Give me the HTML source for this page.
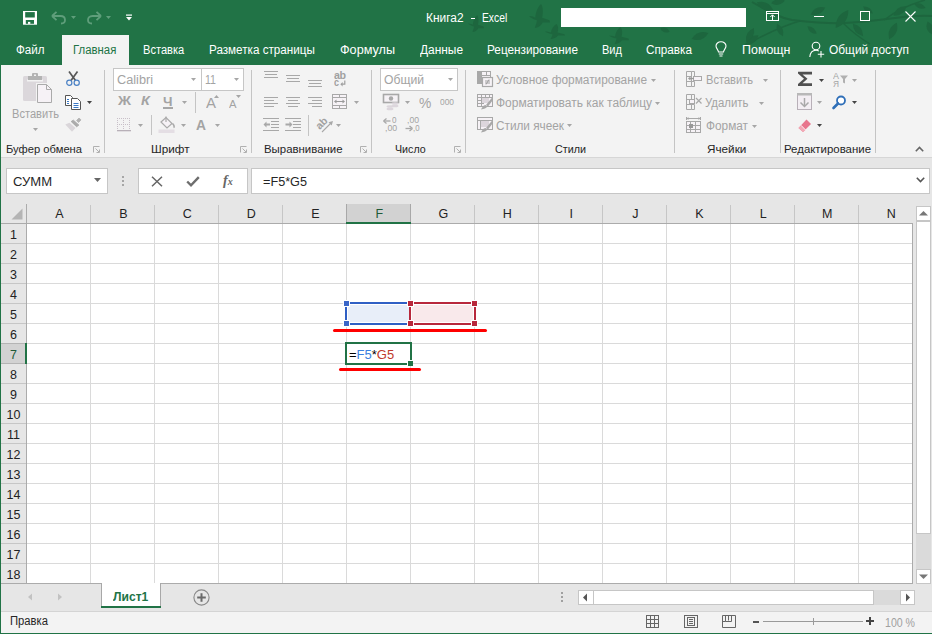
<!DOCTYPE html>
<html><head><meta charset="utf-8"><style>*{margin:0;padding:0;box-sizing:border-box}
html,body{width:932px;height:634px;overflow:hidden;background:#e6e6e6;font-family:"Liberation Sans",sans-serif;position:relative}
.a{position:absolute}
.tx{white-space:nowrap;transform-origin:0 0}
svg{overflow:visible}
</style></head><body>
<div class="a" style="left:0px;top:0px;width:932px;height:65px;background:#217346"></div>
<svg class="a" style="left:0;top:0" width="932" height="65" viewBox="0 0 932 65"><path d="M752 2 C770 12 780 18 792 20 C810 22 830 24 845 23 C865 22 880 20 895 18 C910 16 920 15 932 16" fill="none" stroke="#1d663e" stroke-width="2"/><path d="M745 45 C760 38 775 28 800 21" fill="none" stroke="#1d663e" stroke-width="1.5"/><path d="M884 20 C895 12 905 6 925 0" fill="none" stroke="#1d663e" stroke-width="1.5"/><path d="M843 23 C850 30 860 38 870 44" fill="none" stroke="#1d663e" stroke-width="1.2"/><path transform="translate(842 19) rotate(-55)" d="M-11 0 Q0 -8.0 11 0 Q0 8.0 -11 0 Z" fill="#1d663e"/><path transform="translate(858 30) rotate(50)" d="M-8 0 Q0 -6.4 8 0 Q0 6.4 -8 0 Z" fill="#1d663e"/><path transform="translate(893 31) rotate(-65)" d="M-9 0 Q0 -7.2 9 0 Q0 7.2 -9 0 Z" fill="#1d663e"/><path transform="translate(900 11) rotate(-35)" d="M-8 0 Q0 -6.4 8 0 Q0 6.4 -8 0 Z" fill="#1d663e"/><path transform="translate(765 6) rotate(25)" d="M-9 0 Q0 -7.2 9 0 Q0 7.2 -9 0 Z" fill="#1d663e"/><path transform="translate(780 30) rotate(65)" d="M-7 0 Q0 -5.6000000000000005 7 0 Q0 5.6000000000000005 -7 0 Z" fill="#1d663e"/><path transform="translate(818 11) rotate(-25)" d="M-8 0 Q0 -6.4 8 0 Q0 6.4 -8 0 Z" fill="#1d663e"/><path transform="translate(778 2) rotate(-10)" d="M-7 0 Q0 -5.6000000000000005 7 0 Q0 5.6000000000000005 -7 0 Z" fill="#1d663e"/><path transform="translate(930 28) rotate(70)" d="M-7 0 Q0 -6.4 7 0 Q0 6.4 -7 0 Z" fill="#1d663e"/><path transform="translate(752 40) rotate(-35)" d="M-8 0 Q0 -6.4 8 0 Q0 6.4 -8 0 Z" fill="#1d663e"/><path transform="translate(868 10) rotate(35)" d="M-6 0 Q0 -4.800000000000001 6 0 Q0 4.800000000000001 -6 0 Z" fill="#1d663e"/><path transform="translate(920 6) rotate(20)" d="M-6 0 Q0 -4.800000000000001 6 0 Q0 4.800000000000001 -6 0 Z" fill="#1d663e"/><path transform="translate(812 30) rotate(40)" d="M-6 0 Q0 -4.800000000000001 6 0 Q0 4.800000000000001 -6 0 Z" fill="#1d663e"/><path transform="translate(468 15) scale(0.8 0.7727272727272727)" d="M0 11 C3 11 5 12 6 12.5 C6.5 7 8.5 2.5 11.5 0 C13.5 3 13.5 8 12.5 12.5 L19.5 15 L20 17 L13 17 C11.5 20 8.5 22 5.5 22 C6.5 19.5 7.5 17 7.5 15 C4 14 2 13 0 11 Z" fill="#1d663e"/><path transform="translate(529 4) scale(1.05 1.0909090909090908)" d="M0 11 C3 11 5 12 6 12.5 C6.5 7 8.5 2.5 11.5 0 C13.5 3 13.5 8 12.5 12.5 L19.5 15 L20 17 L13 17 C11.5 20 8.5 22 5.5 22 C6.5 19.5 7.5 17 7.5 15 C4 14 2 13 0 11 Z" fill="#1d663e"/><path transform="translate(545 24) scale(1.0 0.6818181818181818)" d="M0 11 C3 11 5 12 6 12.5 C6.5 7 8.5 2.5 11.5 0 C13.5 3 13.5 8 12.5 12.5 L19.5 15 L20 17 L13 17 C11.5 20 8.5 22 5.5 22 C6.5 19.5 7.5 17 7.5 15 C4 14 2 13 0 11 Z" fill="#1d663e"/><path transform="translate(609 27) scale(1.0 0.7727272727272727)" d="M0 11 C3 11 5 12 6 12.5 C6.5 7 8.5 2.5 11.5 0 C13.5 3 13.5 8 12.5 12.5 L19.5 15 L20 17 L13 17 C11.5 20 8.5 22 5.5 22 C6.5 19.5 7.5 17 7.5 15 C4 14 2 13 0 11 Z" fill="#1d663e"/><path transform="translate(700 36) rotate(-20)" d="M-9 0 Q0 -7.2 9 0 Q0 7.2 -9 0 Z" fill="#1d663e"/><path transform="translate(750 35) rotate(-60)" d="M-8 0 Q0 -6.4 8 0 Q0 6.4 -8 0 Z" fill="#1d663e"/><path transform="translate(665 30) rotate(20)" d="M-5 0 Q0 -4.800000000000001 5 0 Q0 4.800000000000001 -5 0 Z" fill="#1d663e"/></svg>
<div class="a tx" style="transform:scaleX(0.9926);left:426.2px;top:11.84px;font-size:12px;line-height:12px;color:#fff;">Книга2</div>
<div class="a" style="left:471px;top:18px;width:3.5px;height:1.2px;background:#fff"></div>
<div class="a tx" style="transform:scaleX(0.8588);left:481.5px;top:11.84px;font-size:12px;line-height:12px;color:#fff;">Excel</div>
<div class="a" style="left:561px;top:8px;width:185px;height:19px;background:#fff"></div>
<div class="a" style="left:62px;top:35px;width:67px;height:30px;background:#f3f3f3"></div>
<div class="a tx" style="transform:scaleX(0.9477);left:73.3px;top:43.84px;font-size:12px;line-height:12px;color:#217346;">Главная</div>
<div class="a tx" style="transform:scaleX(0.9656);left:16px;top:43.84px;font-size:12px;line-height:12px;color:#fff;">Файл</div>
<div class="a tx" style="transform:scaleX(0.9236);left:142.5px;top:43.84px;font-size:12px;line-height:12px;color:#fff;">Вставка</div>
<div class="a tx" style="transform:scaleX(0.9718);left:209.4px;top:43.84px;font-size:12px;line-height:12px;color:#fff;">Разметка страницы</div>
<div class="a tx" style="transform:scaleX(1.0533);left:340px;top:43.84px;font-size:12px;line-height:12px;color:#fff;">Формулы</div>
<div class="a tx" style="transform:scaleX(0.9917);left:420px;top:43.84px;font-size:12px;line-height:12px;color:#fff;">Данные</div>
<div class="a tx" style="transform:scaleX(0.9820);left:487px;top:43.84px;font-size:12px;line-height:12px;color:#fff;">Рецензирование</div>
<div class="a tx" style="transform:scaleX(0.9209);left:602px;top:43.84px;font-size:12px;line-height:12px;color:#fff;">Вид</div>
<div class="a tx" style="transform:scaleX(0.9771);left:646px;top:43.84px;font-size:12px;line-height:12px;color:#fff;">Справка</div>
<div class="a tx" style="transform:scaleX(1.0378);left:741.6px;top:43.84px;font-size:12px;line-height:12px;color:#fff;">Помощн</div>
<div class="a tx" style="transform:scaleX(0.9922);left:829px;top:43.84px;font-size:12px;line-height:12px;color:#fff;">Общий доступ</div>
<div class="a" style="left:1px;top:65px;width:931px;height:92px;background:#f3f3f3"></div>
<div class="a" style="left:1px;top:157px;width:931px;height:1px;background:#d6d6d6"></div>
<div class="a" style="left:0px;top:65px;width:1px;height:569px;background:#217346"></div>
<div class="a" style="left:6px;top:168px;width:102px;height:26px;background:#fff;border:1px solid #c6c6c6"></div>
<div class="a tx" style="transform:scaleX(1.0866);left:13.4px;top:175.84px;font-size:12px;line-height:12px;color:#262626;">СУММ</div>
<div class="a" style="left:138px;top:168px;width:110px;height:26px;background:#fff;border:1px solid #c6c6c6"></div>
<div class="a" style="left:251px;top:168px;width:679px;height:26px;background:#fff;border:1px solid #c6c6c6"></div>
<div class="a tx" style="transform:scaleX(1.0551);left:262.7px;top:175.84px;font-size:12px;line-height:12px;color:#262626;">=F5*G5</div>
<div class="a" style="left:1px;top:223px;width:912px;height:360px;background:#fff"></div>
<div class="a" style="left:1px;top:204px;width:912px;height:19px;background:#e6e6e6"></div>
<svg class="a" style="left:11px;top:208px;" width="12" height="12" viewBox="0 0 12 12"><path d="M11.5 0.5 L11.5 11.5 L0.5 11.5 Z" fill="#b4b4b4"/></svg>
<div class="a" style="left:1px;top:224px;width:25px;height:359px;background:#e6e6e6"></div>
<div class="a" style="left:90px;top:224px;width:1px;height:359px;background:#dadada"></div>
<div class="a" style="left:90px;top:205px;width:1px;height:18px;background:#c6c6c6"></div>
<div class="a" style="left:154px;top:224px;width:1px;height:359px;background:#dadada"></div>
<div class="a" style="left:154px;top:205px;width:1px;height:18px;background:#c6c6c6"></div>
<div class="a" style="left:218px;top:224px;width:1px;height:359px;background:#dadada"></div>
<div class="a" style="left:218px;top:205px;width:1px;height:18px;background:#c6c6c6"></div>
<div class="a" style="left:282px;top:224px;width:1px;height:359px;background:#dadada"></div>
<div class="a" style="left:282px;top:205px;width:1px;height:18px;background:#c6c6c6"></div>
<div class="a" style="left:346px;top:224px;width:1px;height:359px;background:#dadada"></div>
<div class="a" style="left:346px;top:205px;width:1px;height:18px;background:#c6c6c6"></div>
<div class="a" style="left:410px;top:224px;width:1px;height:359px;background:#dadada"></div>
<div class="a" style="left:410px;top:205px;width:1px;height:18px;background:#c6c6c6"></div>
<div class="a" style="left:474px;top:224px;width:1px;height:359px;background:#dadada"></div>
<div class="a" style="left:474px;top:205px;width:1px;height:18px;background:#c6c6c6"></div>
<div class="a" style="left:538px;top:224px;width:1px;height:359px;background:#dadada"></div>
<div class="a" style="left:538px;top:205px;width:1px;height:18px;background:#c6c6c6"></div>
<div class="a" style="left:602px;top:224px;width:1px;height:359px;background:#dadada"></div>
<div class="a" style="left:602px;top:205px;width:1px;height:18px;background:#c6c6c6"></div>
<div class="a" style="left:666px;top:224px;width:1px;height:359px;background:#dadada"></div>
<div class="a" style="left:666px;top:205px;width:1px;height:18px;background:#c6c6c6"></div>
<div class="a" style="left:730px;top:224px;width:1px;height:359px;background:#dadada"></div>
<div class="a" style="left:730px;top:205px;width:1px;height:18px;background:#c6c6c6"></div>
<div class="a" style="left:794px;top:224px;width:1px;height:359px;background:#dadada"></div>
<div class="a" style="left:794px;top:205px;width:1px;height:18px;background:#c6c6c6"></div>
<div class="a" style="left:858px;top:224px;width:1px;height:359px;background:#dadada"></div>
<div class="a" style="left:858px;top:205px;width:1px;height:18px;background:#c6c6c6"></div>
<div class="a" style="left:27px;top:243px;width:885px;height:1px;background:#dadada"></div>
<div class="a" style="left:1px;top:243px;width:25px;height:1px;background:#c6c6c6"></div>
<div class="a" style="left:27px;top:263px;width:885px;height:1px;background:#dadada"></div>
<div class="a" style="left:1px;top:263px;width:25px;height:1px;background:#c6c6c6"></div>
<div class="a" style="left:27px;top:283px;width:885px;height:1px;background:#dadada"></div>
<div class="a" style="left:1px;top:283px;width:25px;height:1px;background:#c6c6c6"></div>
<div class="a" style="left:27px;top:303px;width:885px;height:1px;background:#dadada"></div>
<div class="a" style="left:1px;top:303px;width:25px;height:1px;background:#c6c6c6"></div>
<div class="a" style="left:27px;top:323px;width:885px;height:1px;background:#dadada"></div>
<div class="a" style="left:1px;top:323px;width:25px;height:1px;background:#c6c6c6"></div>
<div class="a" style="left:27px;top:343px;width:885px;height:1px;background:#dadada"></div>
<div class="a" style="left:1px;top:343px;width:25px;height:1px;background:#c6c6c6"></div>
<div class="a" style="left:27px;top:363px;width:885px;height:1px;background:#dadada"></div>
<div class="a" style="left:1px;top:363px;width:25px;height:1px;background:#c6c6c6"></div>
<div class="a" style="left:27px;top:383px;width:885px;height:1px;background:#dadada"></div>
<div class="a" style="left:1px;top:383px;width:25px;height:1px;background:#c6c6c6"></div>
<div class="a" style="left:27px;top:403px;width:885px;height:1px;background:#dadada"></div>
<div class="a" style="left:1px;top:403px;width:25px;height:1px;background:#c6c6c6"></div>
<div class="a" style="left:27px;top:423px;width:885px;height:1px;background:#dadada"></div>
<div class="a" style="left:1px;top:423px;width:25px;height:1px;background:#c6c6c6"></div>
<div class="a" style="left:27px;top:443px;width:885px;height:1px;background:#dadada"></div>
<div class="a" style="left:1px;top:443px;width:25px;height:1px;background:#c6c6c6"></div>
<div class="a" style="left:27px;top:463px;width:885px;height:1px;background:#dadada"></div>
<div class="a" style="left:1px;top:463px;width:25px;height:1px;background:#c6c6c6"></div>
<div class="a" style="left:27px;top:483px;width:885px;height:1px;background:#dadada"></div>
<div class="a" style="left:1px;top:483px;width:25px;height:1px;background:#c6c6c6"></div>
<div class="a" style="left:27px;top:503px;width:885px;height:1px;background:#dadada"></div>
<div class="a" style="left:1px;top:503px;width:25px;height:1px;background:#c6c6c6"></div>
<div class="a" style="left:27px;top:523px;width:885px;height:1px;background:#dadada"></div>
<div class="a" style="left:1px;top:523px;width:25px;height:1px;background:#c6c6c6"></div>
<div class="a" style="left:27px;top:543px;width:885px;height:1px;background:#dadada"></div>
<div class="a" style="left:1px;top:543px;width:25px;height:1px;background:#c6c6c6"></div>
<div class="a" style="left:27px;top:563px;width:885px;height:1px;background:#dadada"></div>
<div class="a" style="left:1px;top:563px;width:25px;height:1px;background:#c6c6c6"></div>
<div class="a" style="left:346px;top:204px;width:65px;height:19px;background:#d2d2d2;border-left:1px solid #a8a8a8;border-right:1px solid #a8a8a8"></div>
<div class="a" style="left:1px;top:343px;width:25px;height:21px;background:#d2d2d2;border-top:1px solid #b4b4b4;border-bottom:1px solid #b4b4b4"></div>
<div class="a" style="left:1px;top:223px;width:912px;height:1px;background:#ababab"></div>
<div class="a" style="left:26px;top:204px;width:1px;height:379px;background:#ababab"></div>
<div class="a" style="left:912px;top:223px;width:1px;height:361px;background:#ababab"></div>
<div class="a" style="left:1px;top:583px;width:912px;height:1px;background:#ababab"></div>
<div class="a" style="left:346px;top:222px;width:65px;height:2px;background:#217346"></div>
<div class="a" style="left:25px;top:343px;width:2px;height:21px;background:#217346"></div>
<div class="a tx" style="left:39.3px;width:40px;text-align:center;top:208.42px;font-size:12.5px;line-height:12.5px;color:#222">A</div>
<div class="a tx" style="left:103.3px;width:40px;text-align:center;top:208.42px;font-size:12.5px;line-height:12.5px;color:#222">B</div>
<div class="a tx" style="left:167.3px;width:40px;text-align:center;top:208.42px;font-size:12.5px;line-height:12.5px;color:#222">C</div>
<div class="a tx" style="left:231.3px;width:40px;text-align:center;top:208.42px;font-size:12.5px;line-height:12.5px;color:#222">D</div>
<div class="a tx" style="left:295.3px;width:40px;text-align:center;top:208.42px;font-size:12.5px;line-height:12.5px;color:#222">E</div>
<div class="a tx" style="left:359.3px;width:40px;text-align:center;top:208.42px;font-size:12.5px;line-height:12.5px;color:#1f5a38">F</div>
<div class="a tx" style="left:423.3px;width:40px;text-align:center;top:208.42px;font-size:12.5px;line-height:12.5px;color:#222">G</div>
<div class="a tx" style="left:487.3px;width:40px;text-align:center;top:208.42px;font-size:12.5px;line-height:12.5px;color:#222">H</div>
<div class="a tx" style="left:551.3px;width:40px;text-align:center;top:208.42px;font-size:12.5px;line-height:12.5px;color:#222">I</div>
<div class="a tx" style="left:615.3px;width:40px;text-align:center;top:208.42px;font-size:12.5px;line-height:12.5px;color:#222">J</div>
<div class="a tx" style="left:679.3px;width:40px;text-align:center;top:208.42px;font-size:12.5px;line-height:12.5px;color:#222">K</div>
<div class="a tx" style="left:743.3px;width:40px;text-align:center;top:208.42px;font-size:12.5px;line-height:12.5px;color:#222">L</div>
<div class="a tx" style="left:807.3px;width:40px;text-align:center;top:208.42px;font-size:12.5px;line-height:12.5px;color:#222">M</div>
<div class="a tx" style="left:871.3px;width:40px;text-align:center;top:208.42px;font-size:12.5px;line-height:12.5px;color:#222">N</div>
<div class="a tx" style="left:1px;width:25px;text-align:center;top:229.42px;font-size:12.5px;line-height:12.5px;color:#222">1</div>
<div class="a tx" style="left:1px;width:25px;text-align:center;top:249.42px;font-size:12.5px;line-height:12.5px;color:#222">2</div>
<div class="a tx" style="left:1px;width:25px;text-align:center;top:269.42px;font-size:12.5px;line-height:12.5px;color:#222">3</div>
<div class="a tx" style="left:1px;width:25px;text-align:center;top:289.42px;font-size:12.5px;line-height:12.5px;color:#222">4</div>
<div class="a tx" style="left:1px;width:25px;text-align:center;top:309.42px;font-size:12.5px;line-height:12.5px;color:#222">5</div>
<div class="a tx" style="left:1px;width:25px;text-align:center;top:329.42px;font-size:12.5px;line-height:12.5px;color:#222">6</div>
<div class="a tx" style="left:1px;width:25px;text-align:center;top:349.42px;font-size:12.5px;line-height:12.5px;color:#1f5a38">7</div>
<div class="a tx" style="left:1px;width:25px;text-align:center;top:369.42px;font-size:12.5px;line-height:12.5px;color:#222">8</div>
<div class="a tx" style="left:1px;width:25px;text-align:center;top:389.42px;font-size:12.5px;line-height:12.5px;color:#222">9</div>
<div class="a tx" style="left:1px;width:25px;text-align:center;top:409.42px;font-size:12.5px;line-height:12.5px;color:#222">10</div>
<div class="a tx" style="left:1px;width:25px;text-align:center;top:429.42px;font-size:12.5px;line-height:12.5px;color:#222">11</div>
<div class="a tx" style="left:1px;width:25px;text-align:center;top:449.42px;font-size:12.5px;line-height:12.5px;color:#222">12</div>
<div class="a tx" style="left:1px;width:25px;text-align:center;top:469.42px;font-size:12.5px;line-height:12.5px;color:#222">13</div>
<div class="a tx" style="left:1px;width:25px;text-align:center;top:489.42px;font-size:12.5px;line-height:12.5px;color:#222">14</div>
<div class="a tx" style="left:1px;width:25px;text-align:center;top:509.42px;font-size:12.5px;line-height:12.5px;color:#222">15</div>
<div class="a tx" style="left:1px;width:25px;text-align:center;top:529.42px;font-size:12.5px;line-height:12.5px;color:#222">16</div>
<div class="a tx" style="left:1px;width:25px;text-align:center;top:549.42px;font-size:12.5px;line-height:12.5px;color:#222">17</div>
<div class="a tx" style="left:1px;width:25px;text-align:center;top:569.42px;font-size:12.5px;line-height:12.5px;color:#222">18</div>
<div class="a" style="left:916px;top:206px;width:15px;height:378px;background:#dadada"></div>
<div class="a" style="left:916px;top:206px;width:15px;height:15px;background:#fff;border:1px solid #c6c6c6"></div>
<div class="a" style="left:916px;top:221px;width:15px;height:313px;background:#fff;border:1px solid #c6c6c6"></div>
<div class="a" style="left:916px;top:569px;width:15px;height:15px;background:#fff;border:1px solid #c6c6c6"></div>
<svg class="a" style="left:918px;top:210px;" width="11" height="6" viewBox="0 0 11 6"><path d="M1 5.5 L5.5 1 L10 5.5 Z" fill="#777"/></svg>
<svg class="a" style="left:918px;top:574px;" width="11" height="6" viewBox="0 0 11 6"><path d="M1 0.5 L5.5 5 L10 0.5 Z" fill="#777"/></svg>
<div class="a" style="left:1px;top:584px;width:931px;height:27px;background:#e6e6e6"></div>
<div class="a" style="left:101px;top:583px;width:60px;height:25px;background:#fff;border-left:1px solid #a8a8a8;border-right:1px solid #a8a8a8"></div>
<div class="a" style="left:101px;top:606px;width:60px;height:2px;background:#217346"></div>
<div class="a tx" style="transform:scaleX(0.9675);left:113.3px;top:591.42px;font-size:12.5px;line-height:12.5px;color:#217346;font-weight:700;">Лист1</div>
<svg class="a" style="left:27px;top:593px;" width="6" height="8" viewBox="0 0 6 8"><path d="M5 0.5 L1 4 L5 7.5 Z" fill="#c2c2c2"/></svg>
<svg class="a" style="left:57px;top:593px;" width="6" height="8" viewBox="0 0 6 8"><path d="M1 0.5 L5 4 L1 7.5 Z" fill="#c2c2c2"/></svg>
<svg class="a" style="left:193px;top:589px;" width="17" height="17" viewBox="0 0 17 17"><circle cx="8.5" cy="8.5" r="7.6" fill="none" stroke="#888" stroke-width="1.1"/><path d="M8.5 4.2 V12.8 M4.2 8.5 H12.8" stroke="#6a6a6a" stroke-width="2"/></svg>
<div class="a" style="left:561px;top:592px;width:2px;height:2px;background:#a0a0a0"></div>
<div class="a" style="left:561px;top:596px;width:2px;height:2px;background:#a0a0a0"></div>
<div class="a" style="left:561px;top:600px;width:2px;height:2px;background:#a0a0a0"></div>
<div class="a" style="left:578px;top:590px;width:337px;height:15px;background:#dadada"></div>
<div class="a" style="left:578px;top:590px;width:16px;height:15px;background:#fff;border:1px solid #c6c6c6"></div>
<div class="a" style="left:593px;top:590px;width:281px;height:15px;background:#fff;border:1px solid #c6c6c6"></div>
<div class="a" style="left:900px;top:590px;width:15px;height:15px;background:#fff;border:1px solid #c6c6c6"></div>
<svg class="a" style="left:582px;top:593px;" width="6" height="9" viewBox="0 0 6 9"><path d="M5 0.5 L1 4.5 L5 8.5 Z" fill="#555"/></svg>
<svg class="a" style="left:905px;top:593px;" width="6" height="9" viewBox="0 0 6 9"><path d="M1 0.5 L5 4.5 L1 8.5 Z" fill="#555"/></svg>
<div class="a" style="left:1px;top:611px;width:931px;height:1px;background:#d4d4d4"></div>
<div class="a" style="left:1px;top:612px;width:931px;height:21px;background:#f3f3f3"></div>
<div class="a" style="left:0px;top:633px;width:932px;height:1px;background:#217346"></div>
<div class="a tx" style="transform:scaleX(0.9372);left:9.5px;top:614.84px;font-size:12px;line-height:12px;color:#262626;">Правка</div>
<svg class="a" style="left:646px;top:615px;" width="13" height="13" viewBox="0 0 13 13"><rect x="0.5" y="0.5" width="12" height="12" fill="none" stroke="#666"/><path d="M4.5 0.5V12.5M8.5 0.5V12.5M0.5 4.5H12.5M0.5 8.5H12.5" stroke="#666"/></svg>
<svg class="a" style="left:684px;top:615px;" width="14" height="13" viewBox="0 0 14 13"><rect x="0.5" y="0.5" width="13" height="12" fill="none" stroke="#666"/><rect x="3.5" y="2.5" width="7" height="8" fill="none" stroke="#666"/><path d="M5 4.5H9M5 6.5H9M5 8.5H9" stroke="#666"/></svg>
<svg class="a" style="left:722px;top:615px;" width="14" height="13" viewBox="0 0 14 13"><path d="M0.5 0.5H13.5V12.5H0.5Z" fill="none" stroke="#666"/><path d="M3.5 0.5V6.5H0.5 M3.5 6.5 H9.5 V0.5 M6.5 0.5V5.5" fill="none" stroke="#666"/></svg>
<div class="a" style="left:753px;top:621px;width:6px;height:2px;background:#555"></div>
<div class="a" style="left:763px;top:621px;width:100px;height:1px;background:#9a9a9a"></div>
<div class="a" style="left:813px;top:618px;width:1px;height:7px;background:#9a9a9a"></div>
<svg class="a" style="left:866px;top:617px;" width="8" height="8" viewBox="0 0 8 8"><path d="M4 0V8M0 4H8" stroke="#444" stroke-width="2"/></svg>
<div class="a tx" style="transform:scaleX(0.8815);left:885px;top:616.84px;font-size:12px;line-height:12px;color:#a0a0a0;">100 %</div>
<div class="a" style="left:345px;top:302px;width:66px;height:23px;border:2px solid #2f5fc4"></div>
<div class="a" style="left:348px;top:305px;width:61px;height:17px;background:#e8eef9"></div>
<div class="a" style="left:409px;top:302px;width:67px;height:23px;border:2px solid #b8283c"></div>
<div class="a" style="left:412px;top:305px;width:61px;height:17px;background:#f9e9eb"></div>
<div class="a" style="left:344px;top:301px;width:5px;height:5px;background:#3a66c8;outline:1px solid #fff"></div>
<div class="a" style="left:344px;top:321px;width:5px;height:5px;background:#3a66c8;outline:1px solid #fff"></div>
<div class="a" style="left:408px;top:301px;width:5px;height:5px;background:#b8283c;outline:1px solid #fff"></div>
<div class="a" style="left:408px;top:321px;width:5px;height:5px;background:#b8283c;outline:1px solid #fff"></div>
<div class="a" style="left:472px;top:301px;width:5px;height:5px;background:#b8283c;outline:1px solid #fff"></div>
<div class="a" style="left:472px;top:321px;width:5px;height:5px;background:#b8283c;outline:1px solid #fff"></div>
<div class="a" style="left:345px;top:342px;width:67px;height:23px;border:2px solid #217346"></div>
<div class="a" style="left:407px;top:360px;width:6px;height:6px;background:#fff"></div>
<div class="a" style="left:408px;top:361px;width:5px;height:5px;background:#217346"></div>
<div class="a tx" style="left:349px;top:349.42px;font-size:12.5px;line-height:12.5px;color:#000;transform-origin:0 0;transform:scaleX(1.04)">=<span style="color:#3b7fe0">F5</span>*<span style="color:#c0392b">G5</span></div>
<svg class="a" style="left:333px;top:329px;" width="154" height="3" viewBox="0 0 154 3"><path d="M1.5 1.5 H152.5" stroke="#ff0000" stroke-width="3" stroke-linecap="round"/></svg>
<svg class="a" style="left:339px;top:368px;" width="82" height="3" viewBox="0 0 82 3"><path d="M1.5 1.5 H80.5" stroke="#ff0000" stroke-width="3" stroke-linecap="round"/></svg>
<div class="a" style="left:104px;top:70px;width:1px;height:83px;background:#c4c4c4"></div>
<div class="a" style="left:251px;top:70px;width:1px;height:83px;background:#c4c4c4"></div>
<div class="a" style="left:371px;top:70px;width:1px;height:83px;background:#c4c4c4"></div>
<div class="a" style="left:465px;top:70px;width:1px;height:83px;background:#c4c4c4"></div>
<div class="a" style="left:674px;top:70px;width:1px;height:83px;background:#c4c4c4"></div>
<div class="a" style="left:780px;top:70px;width:1px;height:83px;background:#c4c4c4"></div>
<div class="a" style="left:875px;top:70px;width:1px;height:83px;background:#c4c4c4"></div>
<div class="a tx" style="transform:scaleX(0.9900);left:6.3px;top:144.43px;font-size:11.3px;line-height:11.3px;color:#262626;">Буфер обмена</div>
<div class="a tx" style="transform:scaleX(1.0357);left:150.5px;top:144.43px;font-size:11.3px;line-height:11.3px;color:#262626;">Шрифт</div>
<div class="a tx" style="transform:scaleX(1.0094);left:263.5px;top:144.43px;font-size:11.3px;line-height:11.3px;color:#262626;">Выравнивание</div>
<div class="a tx" style="transform:scaleX(0.9446);left:394.7px;top:144.43px;font-size:11.3px;line-height:11.3px;color:#262626;">Число</div>
<div class="a tx" style="transform:scaleX(0.9525);left:554.5px;top:144.43px;font-size:11.3px;line-height:11.3px;color:#262626;">Стили</div>
<div class="a tx" style="transform:scaleX(1.0372);left:707.1px;top:144.43px;font-size:11.3px;line-height:11.3px;color:#262626;">Ячейки</div>
<div class="a tx" style="transform:scaleX(1.0109);left:784.3px;top:144.43px;font-size:11.3px;line-height:11.3px;color:#262626;">Редактирование</div>
<svg class="a" style="left:93px;top:146px;" width="7" height="7" viewBox="0 0 7 7"><path d="M0.5 6.5 V0.5 H6.5" fill="none" stroke="#b0b0b0"/><path d="M2.5 2.5 L6 6 M3.5 6.5 H6.5 V3.5" fill="none" stroke="#b0b0b0"/></svg>
<svg class="a" style="left:240px;top:146px;" width="7" height="7" viewBox="0 0 7 7"><path d="M0.5 6.5 V0.5 H6.5" fill="none" stroke="#b0b0b0"/><path d="M2.5 2.5 L6 6 M3.5 6.5 H6.5 V3.5" fill="none" stroke="#b0b0b0"/></svg>
<svg class="a" style="left:360px;top:146px;" width="7" height="7" viewBox="0 0 7 7"><path d="M0.5 6.5 V0.5 H6.5" fill="none" stroke="#b0b0b0"/><path d="M2.5 2.5 L6 6 M3.5 6.5 H6.5 V3.5" fill="none" stroke="#b0b0b0"/></svg>
<svg class="a" style="left:454px;top:146px;" width="7" height="7" viewBox="0 0 7 7"><path d="M0.5 6.5 V0.5 H6.5" fill="none" stroke="#b0b0b0"/><path d="M2.5 2.5 L6 6 M3.5 6.5 H6.5 V3.5" fill="none" stroke="#b0b0b0"/></svg>
<svg class="a" style="left:915px;top:146px;" width="9" height="6" viewBox="0 0 9 6"><path d="M0.8 5.2 L4.5 1.5 L8.2 5.2" fill="none" stroke="#666" stroke-width="1.6"/></svg>
<svg class="a" style="left:22px;top:72px;" width="31" height="32" viewBox="0 0 31 32"><rect x="1" y="4" width="24" height="25" rx="1.5" fill="#dbd7db"/>
<rect x="5" y="7.5" width="16" height="2" fill="#f3f3f3"/>
<rect x="6" y="4" width="14" height="4" fill="#b3b3b3"/><rect x="10" y="1" width="6" height="4" rx="1" fill="#b3b3b3"/><rect x="12" y="2.5" width="2" height="1.5" fill="#f3f3f3"/>
<path d="M14 11 H25 L31 17 V32 H14 Z" fill="#f3f3f3"/>
<path d="M15.5 12.5 H24.5 L29.5 17.5 V30.5 H15.5 Z" fill="#f6f2f6" stroke="#aaa"/><path d="M24.5 12.5 V17.5 H29.5" fill="none" stroke="#aaa"/></svg>
<div class="a tx" style="transform:scaleX(0.9238);left:11.7px;top:107.84px;font-size:12px;line-height:12px;color:#a3a3a3;">Вставить</div>
<svg class="a" style="left:33px;top:128px;" width="5" height="3" viewBox="0 0 5 3"><path d="M0 0 H5 L2.5 3 Z" fill="#a6a6a6"/></svg>
<svg class="a" style="left:66px;top:71px;" width="15" height="16" viewBox="0 0 15 16"><path d="M3 0.5 L9.5 9.5 M11.5 0.5 L5 9.5" stroke="#575757" stroke-width="1.7"/>
<circle cx="3.3" cy="11.8" r="2.6" fill="none" stroke="#4a80c4" stroke-width="1.2"/><circle cx="10.7" cy="11.8" r="2.6" fill="none" stroke="#4a80c4" stroke-width="1.2"/></svg>
<svg class="a" style="left:64px;top:94px;" width="18" height="17" viewBox="0 0 18 17"><path d="M1.5 1.5 H6.5 L8.5 3.5 V11.5 H1.5 Z" fill="#fff" stroke="#555"/>
<path d="M3 5.5 H5 M3 7.5 H5 M3 9.5 H5" stroke="#3a78c4"/>
<path d="M7.5 4.5 H13.5 L16.5 7.5 V15.5 H7.5 Z" fill="#fff" stroke="#555"/>
<path d="M9.5 9.5 H14.5 M9.5 11.5 H14.5 M9.5 13.5 H14.5" stroke="#3a78c4"/></svg>
<svg class="a" style="left:87px;top:101px;" width="5" height="3" viewBox="0 0 5 3"><path d="M0 0 H5 L2.5 3 Z" fill="#444"/></svg>
<svg class="a" style="left:62px;top:114px;" width="24" height="22" viewBox="0 0 24 22"><path d="M3.3 10.4 L7.5 8.8 L13.5 13.9 L10 17.7 Z" fill="#dad6da"/>
<path d="M9.2 7.5 L11.4 6.2 L16.8 11.1 L14.6 12.7 Z" fill="#ababab" stroke="#ababab" stroke-width="1" stroke-linejoin="round"/>
<path d="M14.6 6.4 L17 4 L19 5.9 L16.5 8.5 Z" fill="#b3b3b3" stroke="#b3b3b3" stroke-width="0.8" stroke-linejoin="round"/></svg>
<div class="a" style="left:113px;top:68px;width:89px;height:23px;background:#fff;border:1px solid #c6c6c6"></div>
<div class="a" style="left:201px;top:68px;width:43px;height:23px;background:#fff;border:1px solid #c6c6c6"></div>
<div class="a tx" style="transform:scaleX(1.0583);left:116.6px;top:73.84px;font-size:12px;line-height:12px;color:#a3a3a3;">Calibri</div>
<div class="a tx" style="transform:scaleX(0.8822);left:204.8px;top:73.84px;font-size:12px;line-height:12px;color:#a3a3a3;">11</div>
<svg class="a" style="left:191px;top:78px;" width="5" height="3" viewBox="0 0 5 3"><path d="M0 0 H5 L2.5 3 Z" fill="#a6a6a6"/></svg>
<svg class="a" style="left:234px;top:78px;" width="5" height="3" viewBox="0 0 5 3"><path d="M0 0 H5 L2.5 3 Z" fill="#a6a6a6"/></svg>
<div class="a tx" style="transform:scaleX(1.1492);left:117.5px;top:95.42px;font-size:12.5px;line-height:12.5px;color:#a3a3a3;font-weight:700;">Ж</div>
<div class="a tx" style="transform:scaleX(1.1447);left:140.8px;top:95.42px;font-size:12.5px;line-height:12.5px;color:#a3a3a3;font-weight:700;font-style:italic;">К</div>
<div class="a tx" style="transform:scaleX(1.0393);left:163.3px;top:95.00px;font-size:13px;line-height:13px;color:#a3a3a3;font-weight:700;">Ч</div>
<div class="a" style="left:163px;top:107px;width:10px;height:1.5px;background:#a6a6a6"></div>
<svg class="a" style="left:182px;top:101px;" width="5" height="3" viewBox="0 0 5 3"><path d="M0 0 H5 L2.5 3 Z" fill="#a6a6a6"/></svg>
<div class="a" style="left:195px;top:92px;width:1px;height:21px;background:#c4c4c4"></div>
<div class="a tx" style="transform:scaleX(1.0702);left:205.5px;top:96.15px;font-size:14px;line-height:14px;color:#a3a3a3;">A</div>
<svg class="a" style="left:214px;top:95px;" width="5" height="3" viewBox="0 0 5 3"><path d="M0 3 L2.5 0 L5 3 Z" fill="#a6a6a6"/></svg>
<div class="a tx" style="transform:scaleX(1.0213);left:229.2px;top:98.69px;font-size:11px;line-height:11px;color:#a3a3a3;">A</div>
<svg class="a" style="left:236px;top:95px;" width="5" height="3" viewBox="0 0 5 3"><path d="M0 0 H5 L2.5 3 Z" fill="#a6a6a6"/></svg>
<svg class="a" style="left:117px;top:118px;" width="14" height="14" viewBox="0 0 14 14"><rect x="0" y="0" width="1" height="1" fill="#c8bfc8"/><rect x="0" y="6" width="1" height="1" fill="#c8bfc8"/><rect x="0" y="12" width="1" height="1" fill="#c8bfc8"/><rect x="2" y="0" width="1" height="1" fill="#c8bfc8"/><rect x="2" y="6" width="1" height="1" fill="#c8bfc8"/><rect x="2" y="12" width="1" height="1" fill="#c8bfc8"/><rect x="4" y="0" width="1" height="1" fill="#c8bfc8"/><rect x="4" y="6" width="1" height="1" fill="#c8bfc8"/><rect x="4" y="12" width="1" height="1" fill="#c8bfc8"/><rect x="6" y="0" width="1" height="1" fill="#c8bfc8"/><rect x="6" y="6" width="1" height="1" fill="#c8bfc8"/><rect x="6" y="12" width="1" height="1" fill="#c8bfc8"/><rect x="8" y="0" width="1" height="1" fill="#c8bfc8"/><rect x="8" y="6" width="1" height="1" fill="#c8bfc8"/><rect x="8" y="12" width="1" height="1" fill="#c8bfc8"/><rect x="10" y="0" width="1" height="1" fill="#c8bfc8"/><rect x="10" y="6" width="1" height="1" fill="#c8bfc8"/><rect x="10" y="12" width="1" height="1" fill="#c8bfc8"/><rect x="12" y="0" width="1" height="1" fill="#c8bfc8"/><rect x="12" y="6" width="1" height="1" fill="#c8bfc8"/><rect x="12" y="12" width="1" height="1" fill="#c8bfc8"/><rect x="0" y="0" width="1" height="1" fill="#c8bfc8"/><rect x="0" y="2" width="1" height="1" fill="#c8bfc8"/><rect x="0" y="4" width="1" height="1" fill="#c8bfc8"/><rect x="0" y="6" width="1" height="1" fill="#c8bfc8"/><rect x="0" y="8" width="1" height="1" fill="#c8bfc8"/><rect x="0" y="10" width="1" height="1" fill="#c8bfc8"/><rect x="0" y="12" width="1" height="1" fill="#c8bfc8"/><rect x="6" y="0" width="1" height="1" fill="#c8bfc8"/><rect x="6" y="2" width="1" height="1" fill="#c8bfc8"/><rect x="6" y="4" width="1" height="1" fill="#c8bfc8"/><rect x="6" y="6" width="1" height="1" fill="#c8bfc8"/><rect x="6" y="8" width="1" height="1" fill="#c8bfc8"/><rect x="6" y="10" width="1" height="1" fill="#c8bfc8"/><rect x="6" y="12" width="1" height="1" fill="#c8bfc8"/><rect x="12" y="0" width="1" height="1" fill="#c8bfc8"/><rect x="12" y="2" width="1" height="1" fill="#c8bfc8"/><rect x="12" y="4" width="1" height="1" fill="#c8bfc8"/><rect x="12" y="6" width="1" height="1" fill="#c8bfc8"/><rect x="12" y="8" width="1" height="1" fill="#c8bfc8"/><rect x="12" y="10" width="1" height="1" fill="#c8bfc8"/><rect x="12" y="12" width="1" height="1" fill="#c8bfc8"/><rect x="0" y="12" width="14" height="1.3" fill="#b8b0b8"/></svg>
<svg class="a" style="left:138px;top:124px;" width="5" height="3" viewBox="0 0 5 3"><path d="M0 0 H5 L2.5 3 Z" fill="#a6a6a6"/></svg>
<div class="a" style="left:151px;top:115px;width:1px;height:20px;background:#c4c4c4"></div>
<svg class="a" style="left:158px;top:116px;" width="18" height="17" viewBox="0 0 18 17"><path d="M3 6 L8 1.5 L14 7.5 L9 12 Z" fill="#f6f2f6" stroke="#aaa" stroke-width="1.2"/>
<path d="M8 0.5 V6" stroke="#aaa" stroke-width="1.2"/><path d="M14.5 7.5 C16.5 9.5 16.5 11 15.5 11.5" fill="none" stroke="#aaa" stroke-width="1.6"/>
<rect x="0.5" y="13.5" width="16" height="3.5" fill="#e4dee4"/></svg>
<svg class="a" style="left:181px;top:124px;" width="5" height="3" viewBox="0 0 5 3"><path d="M0 0 H5 L2.5 3 Z" fill="#a6a6a6"/></svg>
<div class="a tx" style="transform:scaleX(0.9877);left:196.4px;top:118.15px;font-size:14px;line-height:14px;color:#a3a3a3;font-weight:700;">A</div>
<svg class="a" style="left:215px;top:124px;" width="5" height="3" viewBox="0 0 5 3"><path d="M0 0 H5 L2.5 3 Z" fill="#a6a6a6"/></svg>
<svg class="a" style="left:264px;top:71px;" width="16" height="16" viewBox="0 0 16 16"><rect x="0" y="0" width="14" height="1" fill="#a8a8a8"/><rect x="1" y="3" width="12" height="1" fill="#a8a8a8"/><rect x="0" y="6" width="14" height="1" fill="#a8a8a8"/></svg>
<svg class="a" style="left:286px;top:75px;" width="16" height="16" viewBox="0 0 16 16"><rect x="0" y="0" width="14" height="1" fill="#a8a8a8"/><rect x="1" y="3" width="12" height="1" fill="#a8a8a8"/><rect x="0" y="6" width="14" height="1" fill="#a8a8a8"/></svg>
<svg class="a" style="left:308px;top:80px;" width="16" height="16" viewBox="0 0 16 16"><rect x="0" y="0" width="14" height="1" fill="#a8a8a8"/><rect x="1" y="3" width="12" height="1" fill="#a8a8a8"/><rect x="0" y="6" width="14" height="1" fill="#a8a8a8"/></svg>
<svg class="a" style="left:264px;top:97px;" width="16" height="16" viewBox="0 0 16 16"><rect x="0" y="0" width="14" height="1" fill="#a8a8a8"/><rect x="0" y="3" width="10" height="1" fill="#a8a8a8"/><rect x="0" y="6" width="14" height="1" fill="#a8a8a8"/><rect x="0" y="9" width="10" height="1" fill="#a8a8a8"/></svg>
<svg class="a" style="left:286px;top:97px;" width="16" height="16" viewBox="0 0 16 16"><rect x="0" y="0" width="14" height="1" fill="#a8a8a8"/><rect x="2" y="3" width="10" height="1" fill="#a8a8a8"/><rect x="0" y="6" width="14" height="1" fill="#a8a8a8"/><rect x="2" y="9" width="10" height="1" fill="#a8a8a8"/></svg>
<svg class="a" style="left:308px;top:97px;" width="16" height="16" viewBox="0 0 16 16"><rect x="0" y="0" width="14" height="1" fill="#a8a8a8"/><rect x="4" y="3" width="10" height="1" fill="#a8a8a8"/><rect x="0" y="6" width="14" height="1" fill="#a8a8a8"/><rect x="4" y="9" width="10" height="1" fill="#a8a8a8"/></svg>
<div class="a tx" style="transform:scaleX(1.0123);left:333.8px;top:69.91px;font-size:10.5px;line-height:10.5px;color:#a0a0a0;font-weight:700;letter-spacing:-0.3px;">ab</div>
<div class="a tx" style="transform:scaleX(0.8556);left:334.2px;top:77.11px;font-size:10.5px;line-height:10.5px;color:#a0a0a0;font-weight:700;">c</div>
<svg class="a" style="left:340px;top:80px;" width="6" height="6" viewBox="0 0 6 6"><path d="M4.8 0.5 V4.2 H2" fill="none" stroke="#a0a0a0" stroke-width="1.2"/><path d="M0.3 4.2 L2.6 2 V6.4 Z" fill="#a0a0a0"/></svg>
<svg class="a" style="left:332px;top:94px;" width="15" height="15" viewBox="0 0 15 15"><rect x="0.5" y="0.5" width="14" height="14" fill="#f6f2f6" stroke="#a8a8a8"/>
<path d="M0.5 3.5 H14.5 M0.5 11.5 H14.5 M7.5 0.5 V3.5 M7.5 11.5 V14.5" stroke="#a8a8a8"/>
<path d="M3 7.5 H12" stroke="#999"/><path d="M2 7.5 L4.5 5.5 V9.5 Z M13 7.5 L10.5 5.5 V9.5 Z" fill="#999"/></svg>
<svg class="a" style="left:354px;top:101px;" width="5" height="3" viewBox="0 0 5 3"><path d="M0 0 H5 L2.5 3 Z" fill="#a6a6a6"/></svg>
<svg class="a" style="left:263px;top:118px;" width="17" height="14" viewBox="0 0 17 14"><rect x="0" y="0" width="16" height="1" fill="#a8a8a8"/><rect x="8" y="3" width="8" height="1" fill="#a8a8a8"/><rect x="8" y="6" width="8" height="1" fill="#a8a8a8"/><rect x="8" y="9" width="8" height="1" fill="#a8a8a8"/><rect x="0" y="12" width="16" height="1" fill="#a8a8a8"/>
<path d="M0.5 6.5 L3.5 3.5 V5.5 H7 V7.5 H3.5 V9.5 Z" fill="#a8a8a8"/></svg>
<svg class="a" style="left:285px;top:118px;" width="17" height="14" viewBox="0 0 17 14"><rect x="0" y="0" width="16" height="1" fill="#a8a8a8"/><rect x="8" y="3" width="8" height="1" fill="#a8a8a8"/><rect x="8" y="6" width="8" height="1" fill="#a8a8a8"/><rect x="8" y="9" width="8" height="1" fill="#a8a8a8"/><rect x="0" y="12" width="16" height="1" fill="#a8a8a8"/>
<path d="M7.5 6.5 L4.5 3.5 V5.5 H0.5 V7.5 H4.5 V9.5 Z" fill="#a8a8a8"/></svg>
<div class="a" style="left:308px;top:115px;width:1px;height:21px;background:#c4c4c4"></div>
<div class="a" style="left:315.5px;top:117.5px;width:11px;height:12px;font-size:10.5px;font-weight:700;line-height:10px;color:#a0a0a0;transform:rotate(-45deg);transform-origin:50% 50%;white-space:nowrap;letter-spacing:-0.3px">ab</div>
<svg class="a" style="left:320px;top:120px;" width="14" height="13" viewBox="0 0 14 13"><path d="M2 12 L11.5 2.5" stroke="#a8a8a8" stroke-width="1.1"/><path d="M13 1 L8.5 2.3 L11.7 5.5 Z" fill="#a8a8a8"/></svg>
<svg class="a" style="left:336px;top:124px;" width="5" height="3" viewBox="0 0 5 3"><path d="M0 0 H5 L2.5 3 Z" fill="#a6a6a6"/></svg>
<div class="a" style="left:380px;top:68px;width:78px;height:23px;background:#fff;border:1px solid #c6c6c6"></div>
<div class="a tx" style="transform:scaleX(1.0127);left:383.5px;top:73.84px;font-size:12px;line-height:12px;color:#a3a3a3;">Общий</div>
<svg class="a" style="left:448px;top:78px;" width="5" height="3" viewBox="0 0 5 3"><path d="M0 0 H5 L2.5 3 Z" fill="#a6a6a6"/></svg>
<svg class="a" style="left:382px;top:93px;" width="19" height="17" viewBox="0 0 19 17"><rect x="1.5" y="1.5" width="15" height="8" fill="#f6f2f6" stroke="#a8a8a8" stroke-width="1.6"/>
<circle cx="9" cy="5.5" r="2.2" fill="#a8a8a8"/>
<ellipse cx="13" cy="10.5" rx="3.5" ry="1.3" fill="#dcd6dc"/><ellipse cx="13" cy="13" rx="3.5" ry="1.3" fill="#dcd6dc"/>
<ellipse cx="8" cy="13.5" rx="3.5" ry="1.3" fill="#dcd6dc"/><ellipse cx="8" cy="16" rx="3.5" ry="1.3" fill="#dcd6dc"/></svg>
<svg class="a" style="left:405px;top:101px;" width="5" height="3" viewBox="0 0 5 3"><path d="M0 0 H5 L2.5 3 Z" fill="#a6a6a6"/></svg>
<div class="a tx" style="transform:scaleX(0.9218);left:419.2px;top:95.30px;font-size:15px;line-height:15px;color:#a3a3a3;">%</div>
<div class="a tx" style="transform:scaleX(0.8828);left:439.8px;top:96.96px;font-size:9.5px;line-height:9.5px;color:#a3a3a3;">000</div>
<div class="a tx" style="transform:scaleX(0.8972);left:392.3px;top:116.38px;font-size:9px;line-height:9px;color:#a3a3a3;">0</div>
<div class="a tx" style="transform:scaleX(0.9748);left:385px;top:124.38px;font-size:9px;line-height:9px;color:#a3a3a3;">,00</div>
<svg class="a" style="left:383px;top:118px;" width="8" height="6" viewBox="0 0 8 6"><path d="M1 3 H7.5" stroke="#a8a8a8" stroke-width="1.3"/><path d="M0.5 3 L3.5 0.5 M0.5 3 L3.5 5.5" stroke="#a8a8a8" stroke-width="1.3" fill="none"/></svg>
<div class="a tx" style="transform:scaleX(0.9588);left:407px;top:116.38px;font-size:9px;line-height:9px;color:#a3a3a3;">,00</div>
<div class="a tx" style="transform:scaleX(0.8649);left:412.5px;top:124.38px;font-size:9px;line-height:9px;color:#a3a3a3;">,0</div>
<svg class="a" style="left:405px;top:125px;" width="8" height="7" viewBox="0 0 8 7"><path d="M0.5 3.5 H6.5" stroke="#a8a8a8" stroke-width="1.3"/><path d="M7.5 3.5 L4.5 1 M7.5 3.5 L4.5 6" stroke="#a8a8a8" stroke-width="1.3" fill="none"/></svg>
<svg class="a" style="left:477px;top:71px;" width="17" height="17" viewBox="0 0 17 17"><rect x="0.5" y="0.5" width="13" height="12" fill="#f6f2f6" stroke="#a8a8a8"/>
<rect x="0" y="0" width="5" height="13" fill="#a8a8a8"/><path d="M0.5 4.5 H13.5 M0.5 8.5 H6 M9.5 0.5 V5" stroke="#a8a8a8"/>
<rect x="5.5" y="6.5" width="10" height="9" fill="#f6f2f6" stroke="#a8a8a8" stroke-width="1.2"/>
<path d="M8 10 H13 M8 12 H13 M12 8.5 L9 13.5" stroke="#999" stroke-width="0.9"/></svg>
<div class="a tx" style="transform:scaleX(0.9890);left:496.1px;top:73.84px;font-size:12px;line-height:12px;color:#a3a3a3;">Условное форматирование</div>
<svg class="a" style="left:651px;top:79px;" width="5" height="3" viewBox="0 0 5 3"><path d="M0 0 H5 L2.5 3 Z" fill="#a6a6a6"/></svg>
<svg class="a" style="left:477px;top:94px;" width="17" height="16" viewBox="0 0 17 16"><rect x="0.5" y="0.5" width="15" height="12" fill="#f6f2f6" stroke="#a8a8a8"/><path d="M0.5 3.5 H15.5 M0.5 6.5 H9 M0.5 9.5 H7 M4.5 0.5 V12 M8.5 0.5 V8 M12.5 0.5 V4" stroke="#a8a8a8"/><rect x="5" y="4" width="7" height="5" fill="#dcd6dc"/><path d="M15.5 3 L9 11 L11 12.5 L16 6 Z" fill="#a8a8a8"/><path d="M8.5 11 C6 11.5 5.5 13 4 15.5 C7 15 9.5 14 10.5 12.5 Z" fill="#a8a8a8"/></svg>
<div class="a tx" style="transform:scaleX(0.9991);left:496.1px;top:96.84px;font-size:12px;line-height:12px;color:#a3a3a3;">Форматировать как таблицу</div>
<svg class="a" style="left:655px;top:102px;" width="5" height="3" viewBox="0 0 5 3"><path d="M0 0 H5 L2.5 3 Z" fill="#a6a6a6"/></svg>
<svg class="a" style="left:477px;top:117px;" width="17" height="16" viewBox="0 0 17 16"><rect x="0.5" y="0.5" width="15" height="12" fill="#f6f2f6" stroke="#a8a8a8"/><path d="M0.5 3.5 H15.5 M3.5 3.5 V12.5" stroke="#a8a8a8"/><rect x="4" y="4" width="8" height="6" fill="#dcd6dc"/><path d="M15.5 3 L9 11 L11 12.5 L16 6 Z" fill="#a8a8a8"/><path d="M8.5 11 C6 11.5 5.5 13 4 15.5 C7 15 9.5 14 10.5 12.5 Z" fill="#a8a8a8"/></svg>
<div class="a tx" style="transform:scaleX(0.9817);left:496.1px;top:119.84px;font-size:12px;line-height:12px;color:#a3a3a3;">Стили ячеек</div>
<svg class="a" style="left:567px;top:124px;" width="5" height="3" viewBox="0 0 5 3"><path d="M0 0 H5 L2.5 3 Z" fill="#a6a6a6"/></svg>
<svg class="a" style="left:686px;top:71px;" width="17" height="17" viewBox="0 0 17 17"><path d="M0.5 0.5 H5.5 V15.5 H0.5 Z M0.5 5.5 H5.5 M0.5 10.5 H5.5 M5.5 0.5 H8.5 V5.5 M5.5 10.5 H8.5 V15.5 H5.5" fill="none" stroke="#a8a8a8"/>
<rect x="7.5" y="5.5" width="8" height="4" fill="#f6f2f6" stroke="#a8a8a8"/><path d="M3 7.5 H8" stroke="#999" stroke-width="1.2"/><path d="M2 7.5 L4.5 5.5 V9.5 Z" fill="#999"/></svg>
<div class="a tx" style="transform:scaleX(0.9238);left:705.6px;top:73.84px;font-size:12px;line-height:12px;color:#a3a3a3;">Вставить</div>
<svg class="a" style="left:763px;top:79px;" width="5" height="3" viewBox="0 0 5 3"><path d="M0 0 H5 L2.5 3 Z" fill="#a6a6a6"/></svg>
<svg class="a" style="left:686px;top:94px;" width="17" height="17" viewBox="0 0 17 17"><path d="M0.5 0.5 H5.5 V15.5 H0.5 Z M0.5 5.5 H5.5 M0.5 10.5 H5.5 M5.5 0.5 H8.5 V5.5 M5.5 10.5 H8.5 V15.5 H5.5" fill="none" stroke="#a8a8a8"/>
<rect x="3.5" y="5.5" width="5" height="4" fill="#f6f2f6" stroke="#a8a8a8"/><path d="M10 4 L15.5 9.5 M15.5 4 L10 9.5" stroke="#a8a8a8" stroke-width="1.2"/></svg>
<div class="a tx" style="transform:scaleX(0.9470);left:705.2px;top:96.84px;font-size:12px;line-height:12px;color:#a3a3a3;">Удалить</div>
<svg class="a" style="left:759px;top:102px;" width="5" height="3" viewBox="0 0 5 3"><path d="M0 0 H5 L2.5 3 Z" fill="#a6a6a6"/></svg>
<svg class="a" style="left:686px;top:117px;" width="17" height="17" viewBox="0 0 17 17"><path d="M0.5 0 V3 M14.5 0 V3 M1 1.5 H14" stroke="#a8a8a8"/><path d="M0.5 1.5 L2.5 0 V3 Z M14.5 1.5 L12.5 0 V3 Z" fill="#a8a8a8"/>
<rect x="0.5" y="4.5" width="14" height="11" fill="#f6f2f6" stroke="#a8a8a8"/><path d="M0.5 8.5 H14.5 M0.5 12.5 H14.5 M4.5 4.5 V15.5 M9.5 4.5 V15.5" stroke="#a8a8a8"/><rect x="3" y="7" width="4" height="4" fill="#999"/></svg>
<div class="a tx" style="transform:scaleX(0.9850);left:705.6px;top:119.84px;font-size:12px;line-height:12px;color:#a3a3a3;">Формат</div>
<svg class="a" style="left:751.5px;top:125px;" width="5" height="3" viewBox="0 0 5 3"><path d="M0 0 H5 L2.5 3 Z" fill="#a6a6a6"/></svg>
<svg class="a" style="left:797px;top:71px;" width="16" height="16" viewBox="0 0 16 16"><path d="M1 0.8 H15 V3.5 H5.5 L10.5 7.8 L5.5 12.2 H15 V15 H1 V13 L7 7.8 L1 2.6 Z" fill="#505050"/></svg>
<svg class="a" style="left:819px;top:79px;" width="5" height="3" viewBox="0 0 5 3"><path d="M0 0 H5 L2.5 3 Z" fill="#444"/></svg>
<div class="a tx" style="transform:scaleX(1.0579);left:833px;top:71.80px;font-size:8.5px;line-height:8.5px;color:#a3a3a3;">А</div>
<div class="a tx" style="transform:scaleX(0.9771);left:833px;top:79.80px;font-size:8.5px;line-height:8.5px;color:#a3a3a3;">Я</div>
<svg class="a" style="left:840px;top:75px;" width="8" height="9" viewBox="0 0 8 9"><path d="M0 0.5 H8 L5 4 V8.5 L3 7.5 V4 Z" fill="#b0b0b0"/></svg>
<svg class="a" style="left:852px;top:79px;" width="5" height="3" viewBox="0 0 5 3"><path d="M0 0 H5 L2.5 3 Z" fill="#a6a6a6"/></svg>
<svg class="a" style="left:797px;top:93px;" width="16" height="18" viewBox="0 0 16 18"><rect x="0.5" y="0.5" width="14" height="16" fill="#f3eef3" stroke="#b8b0b8"/><rect x="0" y="0" width="15" height="2.5" fill="#b8b8b8"/>
<path d="M7.5 5 V13" stroke="#a8a8a8" stroke-width="1.5"/><path d="M3.5 9.5 L7.5 13.5 L11.5 9.5" fill="none" stroke="#a8a8a8" stroke-width="1.5"/></svg>
<svg class="a" style="left:817px;top:101px;" width="5" height="3" viewBox="0 0 5 3"><path d="M0 0 H5 L2.5 3 Z" fill="#a6a6a6"/></svg>
<svg class="a" style="left:832px;top:95px;" width="15" height="14" viewBox="0 0 15 14"><circle cx="9" cy="5.5" r="4" fill="#fff" stroke="#2f6fb8" stroke-width="1.8"/><path d="M6 8.5 L1.5 13" stroke="#2f6fb8" stroke-width="2.6" stroke-linecap="round"/></svg>
<svg class="a" style="left:852px;top:101px;" width="5" height="3" viewBox="0 0 5 3"><path d="M0 0 H5 L2.5 3 Z" fill="#444"/></svg>
<svg class="a" style="left:797px;top:117px;" width="15" height="15" viewBox="0 0 15 15"><path d="M1.5 11 L9.5 2.5 L14 7 L6 15 Z" fill="#e8768d"/><path d="M1.5 11 L4 8.5 L8.5 13 L6 15 Z" fill="#f3a9b6"/><path d="M4 8.3 L8.7 13.1" stroke="#fff" stroke-width="0.9"/></svg>
<svg class="a" style="left:817px;top:124px;" width="5" height="3" viewBox="0 0 5 3"><path d="M0 0 H5 L2.5 3 Z" fill="#444"/></svg>
<svg class="a" style="left:23px;top:11px;" width="14" height="14" viewBox="0 0 14 14"><rect x="0" y="0" width="14" height="13.7" fill="#fff"/><rect x="2.2" y="1.1" width="9.6" height="5.4" fill="#217346"/>
<rect x="2.8" y="9" width="8.2" height="3.8" fill="#217346"/><rect x="5" y="10.9" width="2.3" height="2" fill="#fff"/></svg>
<svg class="a" style="left:51px;top:11px;" width="16" height="13" viewBox="0 0 16 13"><path d="M2 5 H9.5 C12.5 5 14 7 14 9 C14 11 12.5 12.5 10 12.5" fill="none" stroke="#5f9e7b" stroke-width="1.8"/><path d="M1 5 L5.5 0.8 M1 5 L5.5 9.2" fill="none" stroke="#5f9e7b" stroke-width="1.8"/></svg>
<svg class="a" style="left:71px;top:16px;" width="5" height="3" viewBox="0 0 5 3"><path d="M0 0 H5 L2.5 3 Z" fill="#5f9e7b"/></svg>
<svg class="a" style="left:86px;top:11px;" width="16" height="13" viewBox="0 0 16 13"><path d="M14 5 H6.5 C3.5 5 2 7 2 9 C2 11 3.5 12.5 6 12.5" fill="none" stroke="#5f9e7b" stroke-width="1.8"/><path d="M15 5 L10.5 0.8 M15 5 L10.5 9.2" fill="none" stroke="#5f9e7b" stroke-width="1.8"/></svg>
<svg class="a" style="left:106px;top:16px;" width="5" height="3" viewBox="0 0 5 3"><path d="M0 0 H5 L2.5 3 Z" fill="#5f9e7b"/></svg>
<svg class="a" style="left:126px;top:14px;" width="6" height="7" viewBox="0 0 6 7"><rect x="0" y="0.5" width="6" height="1.2" fill="#fff"/><path d="M0 3 H6 L3 6.5 Z" fill="#fff"/></svg>
<svg class="a" style="left:766px;top:11px;" width="13" height="10" viewBox="0 0 13 10"><rect x="0.5" y="0.5" width="12" height="9" fill="none" stroke="#fff"/><path d="M0.5 2.5 H12.5" stroke="#fff"/><path d="M6.5 4 V10" stroke="#fff"/><path d="M4.3 6 L6.5 3.8 L8.7 6" fill="none" stroke="#fff"/></svg>
<div class="a" style="left:814px;top:16px;width:10px;height:1px;background:#fff"></div>
<div class="a" style="left:860px;top:11px;width:10px;height:10px;border:1px solid #fff"></div>
<svg class="a" style="left:905px;top:11px;" width="11" height="11" viewBox="0 0 11 11"><path d="M0.5 0.5 L10.5 10.5 M10.5 0.5 L0.5 10.5" stroke="#fff" stroke-width="1.1"/></svg>
<svg class="a" style="left:715px;top:41px;" width="12" height="16" viewBox="0 0 12 16"><path d="M3.5 11 C3.5 9 1 7.5 1 5 C1 2.5 3.2 0.8 6 0.8 C8.8 0.8 11 2.5 11 5 C11 7.5 8.5 9 8.5 11 Z" fill="none" stroke="#fff" stroke-width="1.1"/><path d="M3.8 13 H8.2 M4.5 15 H7.5" stroke="#fff" stroke-width="1.1"/></svg>
<svg class="a" style="left:809px;top:41px;" width="17" height="17" viewBox="0 0 17 17"><circle cx="7" cy="5" r="3.8" fill="none" stroke="#fff" stroke-width="1.1"/><path d="M0.8 16 C1.2 11.5 3.5 9.3 7 9.3 C8.2 9.3 9 9.5 9.8 9.9" fill="none" stroke="#fff" stroke-width="1.1"/><path d="M12 10 V16.5 M8.8 13.2 H15.2" stroke="#fff" stroke-width="1.1"/></svg>
<svg class="a" style="left:94px;top:178px;" width="7" height="4" viewBox="0 0 7 4"><path d="M0 0 H7 L3.5 4 Z" fill="#666"/></svg>
<div class="a" style="left:122px;top:176px;width:2px;height:2px;background:#a6a6a6"></div>
<div class="a" style="left:122px;top:180px;width:2px;height:2px;background:#a6a6a6"></div>
<div class="a" style="left:122px;top:184px;width:2px;height:2px;background:#a6a6a6"></div>
<svg class="a" style="left:151px;top:176px;" width="12" height="11" viewBox="0 0 12 11"><path d="M1 0.8 L11 10.2 M11 0.8 L1 10.2" stroke="#666" stroke-width="1.5"/></svg>
<svg class="a" style="left:186px;top:176px;" width="14" height="11" viewBox="0 0 14 11"><path d="M1.2 5.5 L5 9.3 L12.8 1.2" fill="none" stroke="#6e6e6e" stroke-width="2.4"/></svg>
<div class="a" style="left:223px;top:174px;font-family:&quot;Liberation Serif&quot;,serif;font-style:italic;font-weight:700;font-size:14px;line-height:14px;color:#666;white-space:nowrap">f<span style="font-size:10px">x</span></div>
<svg class="a" style="left:916px;top:177px;" width="9" height="6" viewBox="0 0 9 6"><path d="M0.8 0.8 L4.5 4.5 L8.2 0.8" fill="none" stroke="#555" stroke-width="1.6"/></svg>
</body></html>
